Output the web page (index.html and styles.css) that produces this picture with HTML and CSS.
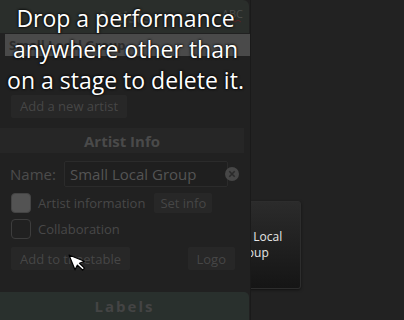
FILE: index.html
```html
<!DOCTYPE html>
<html>
<head>
<meta charset="utf-8">
<link rel="stylesheet" href="styles.css">
</head>
<body>
<div class="app">
  <div class="canvas">
    <div class="card"><span class="card-text">Small Local Group</span></div>
  </div>
  <aside class="panel">
    <div class="hdr hdr-artists">
      <span>Artists</span>
      <span class="abc">ABC<svg class="squiggle" width="18" height="4" viewBox="0 0 18 4"><path d="M0 3 L3 1 L6 3 L9 1 L12 3 L15 1 L18 3" fill="none" stroke="#5a2424" stroke-width="1"/></svg></span>
    </div>
    <div class="list">
      <div class="row sel">Small Local Group</div>
    </div>
    <div class="btn-line">
      <button class="btn">Add a new artist</button>
    </div>
    <div class="hdr hdr-info">Artist Info</div>
    <div class="form">
      <div class="name-row">
        <span class="lbl">Name:</span>
        <div class="input">Small Local Group</div>
        <span class="clear"><svg width="14" height="14" viewBox="0 0 14 14"><circle cx="7" cy="7" r="7" fill="#474747"/><path d="M4.3 4.3 L9.7 9.7 M9.7 4.3 L4.3 9.7" stroke="#2a2a2a" stroke-width="1.6"/></svg></span>
      </div>
      <div class="check-row">
        <span class="box filled"></span>
        <span class="ctext">Artist information</span>
        <button class="btn small">Set info</button>
      </div>
      <div class="check-row">
        <span class="box"></span>
        <span class="ctext">Collaboration</span>
      </div>
      <div class="action-row">
        <button class="btn">Add to timetable</button>
        <button class="btn">Logo</button>
      </div>
    </div>
    <div class="hdr hdr-labels">Labels</div>
  </aside>
  <div class="message">Drop a performance<br>anywhere other than<br>on a stage to delete it.</div>
  <svg class="cursor" width="20" height="24" viewBox="0 0 20 24"><path d="M1 1 L1 17 L5 13.5 L8 20 L10.5 19 L7.6 12.6 L13 12.6 Z" fill="#fff" stroke="#000" stroke-width="1.2" stroke-linejoin="round"/></svg>
</div>
</body>
</html>
```
FILE: styles.css
```css
* { box-sizing: border-box; }
html, body { margin: 0; padding: 0; }
body {
  background: #222222;
  width: 404px;
  height: 320px;
  overflow: hidden;
  font-family: "Open Sans", "Noto Sans", sans-serif;
}
.app {
  position: relative;
  width: 404px;
  height: 320px;
  display: flex;
}
.canvas {
  position: absolute;
  inset: 0;
}
.card {
  position: absolute;
  left: 201px;
  top: 201px;
  width: 100px;
  height: 88px;
  border: 1px solid #2d2d2d;
  border-radius: 3px;
  background: linear-gradient(#2b2b2b, #151515);
  box-shadow: 0 1px 3px rgba(0,0,0,0.5);
  display: flex;
  align-items: center;
  justify-content: center;
  padding: 0 12px;
}
.card-text {
  color: #e6e6e6;
  font-size: 12px;
  line-height: 16px;
  text-align: center;
}
.panel {
  position: relative;
  z-index: 1;
  width: 251px;
  height: 320px;
  background: #212121;
  border-right: 1px solid #1a1a1a;
  display: flex;
  flex-direction: column;
}
.hdr {
  font-weight: bold;
  color: #464646;
  display: flex;
  align-items: center;
  justify-content: center;
}
.hdr-artists {
  position: relative;
  height: 33px;
  margin-right: 1px;
  background: #2a2e2b;
  border-top-right-radius: 6px;
  font-size: 16px;
  color: #3e423f;
}
.abc {
  position: absolute;
  right: 6px;
  top: 8px;
  font-size: 11px;
  font-weight: normal;
  color: #4a4c4a;
  display: flex;
  flex-direction: column;
  line-height: 11px;
}
.squiggle { margin-left: 1px; }
.list {
  height: 56px;
  padding: 1px 0 0 5px;
}
.row {
  height: 22px;
  line-height: 22px;
  padding-left: 4px;
  font-size: 13px;
  font-weight: bold;
}
.row.sel {
  background: #4a4a4a;
  color: #2c2c2c;
}
.btn-line {
  padding: 5px 0 0 11px;
  height: 39px;
}
.btn {
  font-family: "Open Sans", "Noto Sans", sans-serif;
  font-size: 13px;
  color: #464646;
  background: #272727;
  border: none;
  border-radius: 2px;
  height: 23px;
  padding: 0 9px;
}
.hdr-info {
  height: 25px;
  margin-right: 6px;
  background: #262626;
  font-size: 15px;
  color: #4a4a4a;
}
.form {
  padding: 8px 0 0 10px;
  height: 139px;
  display: flex;
  flex-direction: column;
}
.name-row {
  display: flex;
  align-items: center;
  height: 26px;
}
.lbl {
  font-size: 15px;
  color: #4c4c4c;
  width: 54px;
}
.input {
  width: 164px;
  height: 26px;
  background: #1f1f1f;
  border: 1px solid #2b2b2b;
  border-radius: 2px;
  font-size: 15px;
  color: #545454;
  line-height: 24px;
  padding-left: 5px;
}
.clear {
  display: flex;
  margin-left: -3px;
}
.check-row {
  display: flex;
  align-items: center;
  height: 20px;
  margin-top: 6px;
}
.check-row + .check-row { margin-top: 6px; }
.box {
  width: 20px;
  height: 20px;
  margin-left: 1px;
  border: 1px solid #3d3d3d;
  border-radius: 4px;
}
.box.filled {
  background: #535353;
  border-color: #444;
}
.ctext {
  margin-left: 7px;
  font-size: 13px;
  color: #484848;
}
.btn.small {
  margin-left: 9px;
  height: 20px;
  padding: 0 6px;
}
.action-row {
  display: flex;
  justify-content: space-between;
  width: 224px;
  margin-top: 8px;
  margin-left: 1px;
}
.hdr-labels {
  margin-top: auto;
  height: 28px;
  margin-right: 1px;
  background: #29302d;
  border-top-right-radius: 5px;
  font-size: 15px;
  color: #444;
  letter-spacing: 2px;
}
.message {
  position: absolute;
  z-index: 2;
  left: 0;
  top: 3px;
  width: 251px;
  text-align: center;
  color: #fff;
  font-size: 23px;
  line-height: 31px;
  text-shadow: 0 0 2px #000, 0 0 3px #000;
}
.cursor {
  position: absolute;
  z-index: 3;
  left: 68px;
  top: 254px;
  transform: rotate(-22deg);
  transform-origin: 1px 1px;
}
```
